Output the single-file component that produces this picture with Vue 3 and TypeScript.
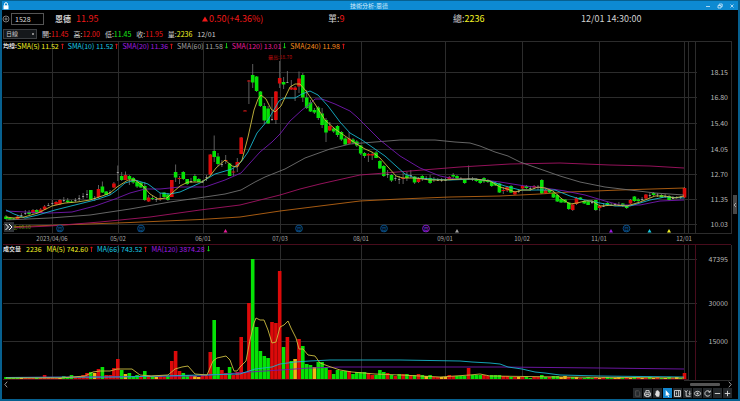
<script setup lang="ts">
interface Candle { x: number; kind: string; top: number; bottom: number; high: number; low: number }
interface Bar { x: number; kind: string; height: number }
interface Average { label: string; value: string; up: boolean; tone: string }

const FIRST_X = 6
const STEP = 3.855
const BASE = 379
const xAt = (i: number): number => Math.round((FIRST_X + STEP * i) * 10) / 10

// kind:bodyTop:bodyBottom:high:low, in chart units ("n" is an unchanged session)
const sessions = `
g:216.5:219:215:219.5 g:218:219.5:218:219.5 g:218.5:219.5:218:220 r:216.5:219:215:219 n:215:215:213:217 n:213:213:210:215
g:212:214:210:215 r:210:213:209:214 g:210:213:209:214 r:209.5:213:208:213 r:206.5:209.5:205:210 n:205:205:203:206
n:203:203:200:206 r:202:204.5:201:205 r:200:204:199:205 n:200:200:197:202 g:200.5:202:198:203 g:201.5:202.5:200:203
n:200:200:198:202 n:198:198:195:201 n:196:196:193:199 n:194:194:190:198 g:190:199.5:190:200 n:198:198:196:201
r:189:197:185:198 g:186.5:192.5:181.5:193 g:191.5:195:191:195 n:192:192:190:195 r:183.5:187.5:182:188 n:172:172:165.5:181
g:176:180:172:181 r:175:180:171.5:180 g:176:179:175:185 g:178:182.5:177:184 g:181.5:186.5:180:188 g:182.5:187.5:182:188
g:186:200:182:201 r:197.5:201.5:195:202 g:198:199:196:200 n:199:199:197:202 r:198:199.5:193:201 g:192.5:197:192:198
g:194.5:200:193:201 r:180:197:180:197 g:172:177.5:164.5:182 r:178:179:176:184 g:172:179:171:180 g:179:184:179:185
n:181:181:178:183 g:176:181:174:182 g:179:182:178:182 n:181.5:181.5:180:183 n:177:177:175:181 r:154.5:174.5:154:175
g:151:157:135.5:162 g:156.5:164:153:166 n:164:164:160:167 r:160:161:155:164 g:163.5:176:163:176 r:171.5:172.5:168:176
r:162:166.5:158:172 r:137.5:154:137:154 r:110.5:110.5:110:111 r:80.5:81.5:80:104 g:75:82.5:64:88 g:76.5:91:76:92
g:91.5:106:91:107 g:106:120.5:103:124 g:108.5:123.5:106:124 n:119:119:97:121 r:91.5:120:91:124 r:78:83.5:61:88
g:82:84.5:77:89 n:82:82:71:83 r:87.5:89.5:80:90 r:87.5:90:86:101 r:78.5:86.5:71.5:93 g:75:97.5:73:102
g:97.5:108:90:109 g:102.5:111.5:100:112 g:110:112.5:108:114 g:107.5:118:106:120 g:113.5:125:108:128 g:120:132.5:118:142
r:126:130.5:122:131 g:128.5:131.5:127:133 g:126:135:125:137 g:132:139.5:131:141 g:138.5:144.5:137:145 r:138.5:143.5:132:144
g:139.5:142.5:138:144 g:141.5:145.5:140:147 g:145.5:153.5:145:155 g:153:156:152:158 r:154:155.5:153:162 r:154:155.5:152:160
g:152.5:158:151:158 g:161:168.5:160:169 g:166:176:165:177 n:174:174:170:178 g:175:180.5:174:182 n:178:178:176:181
n:179:179:176:184 r:178:179:173:184 g:175.5:178:172:181 n:175:175:170:178 g:176.5:182.5:176:184 r:178.5:182:177:183
g:176:179:175:181 n:178:178:176:180 g:178:183:175:184 g:179:180:177:182 n:180:180:178:181 n:180:180:178:182
n:180:180:178:181 r:177:179:176:179 g:175:176.5:173:178 g:176:178.5:175:179 n:178.5:178.5:177:180 g:180:183:179:184
n:178:178:165.5:180 n:179:179:177:181 g:179.5:181:178:182 g:180:183:179:184 g:178:181.5:177:183 g:180:182:179:183
g:182:186:181:187 g:183:185.5:182:186 g:183.5:192.5:183:193 r:190:191:187:194 r:187:190.5:186:192 g:186:192.5:185:193
r:191.5:194.5:191:195 n:191:191:189:193 r:186:188.5:185:189 g:186:188:185:189 n:188:188:186:191 r:186:187.5:185:189
n:187:187:185:190 g:180:193.5:179:194 r:190:193.5:189:194 g:190:192.5:190:193 g:192.5:197.5:192:198 g:195:201.5:194:202
g:199:202.5:198:203 g:199.5:202.5:199:203 g:202.5:209:202:210 r:204.5:210:204:211 r:198:204:197:205 g:197.5:199.5:197:200
g:201:203.5:200:204 g:201.5:205:201:205 n:202:202:200:204 g:200:210:200:211 r:206:208:205:211 n:206:206:203:207
g:203:205:202:206 n:205:205:203:206 n:204:204:203:206 n:205:205:202:206 g:203.5:206:203:207 g:206:208:205:209
r:200:203.5:199:204 g:196.5:201:196:202 g:199.5:201:198:202 n:199:199:197:201 r:194.5:198.5:194:199 n:195:195:193:198
g:193:195:192:196 n:194.5:194.5:193:197 g:195:197.5:194:198 n:196:196:194:198 g:196:200:195:201 n:198:198:196:199
n:197:197:196:199 n:197:197:196:199 r:188:197.5:187:198`

const candles: Candle[] = sessions.trim().split(/\s+/).map((entry, i) => {
  const [kind, ...n] = entry.split(':')
  const [top, bottom, high, low] = n.map(Number)
  return { x: xAt(i), kind, top, bottom: Math.max(bottom, top + 1), high, low }
})

const volumes = `
g2 g1 g1 g1 y2 r2 r1 r1 g1 r1 r4 r2 r2 r1 y1 g3 g2 g4 r2 r3 r4 r6 g7 y6 r10 g12 r4 r4 r11 r20 g9 y5 g6 g3 g4 r2 g8 r4 g3 y2
r3 r2 g3 r18 r28 r8 g6 g4 r4 y3 y2 r4 r3 r27 g59 g12 r9 r6 g12 r4 r7 r42 r7 r76 g120 g52 g28 g23 g21 r57 r56 r108 g32 r42 g18 y20 r40 g33 g15 g14
y12 g17 g17 g12 r9 g5 g9 g8 g8 r8 g5 g7 g7 g7 r6 r4 g4 g9 g7 r6 g4 r3 g5 r5 g5 r4 g4 r5 g4 y3 g4 r2 r2 y2 y2 r4 r3 g3 g3 g3
r11 g4 g4 g4 r4 r3 g4 g4 g4 r3 r3 g2 r2 y2 r2 g2 g1 r2 r2 g4 g2 r2 g3 g3 y2 y3 r2 g2 y2 r1 g1 g2 g1 r2 y1 r2 g2 g1 y1 y2
g1 r2 y1 g2 r2 y1 r1 g2 y1 r2 g1 y1 g2 r1 y2 g1 r6`
const bars: Bar[] = volumes.trim().split(/\s+/).map((entry, i) => ({
  x: xAt(i), kind: entry[0], height: Number(entry.slice(1)),
}))

const priceLines = [
  { tone: 'orange', points: '6,227 60,225 130,222.5 200,219.5 240,217 280,211 320,206 360,201 400,199 450,197 500,196 540,194 570,192 620,190 684,188' },
  { tone: 'magenta', points: '6,228 50,226 100,222 150,217 200,210 240,205 280,195 300,189 320,184 360,175 410,171 460,167 510,164 560,163 610,165 650,166 684,168' },
  { tone: 'gray', points: '6,220 50,218 90,215 130,209 170,202 205,197 225,194 241,190 255,182 265,177 285,169 305,158 330,149 350,144 375,142 400,140 435,140 455,142 470,143 480,146 495,152 508,156 520,162 540,169 560,176 580,182 605,187 630,190 655,193 684,195' },
  { tone: 'purple', points: '6,211 25,212 50,213 72,212 95,206 115,199 130,193 145,189 160,189 180,187 205,187 225,180 241,173 250,163 260,152 272,142 280,134 290,121 302,110 310,104 315,99 322,99 335,104 350,111 357,117 365,125 380,140 400,156 420,168 440,176 455,179 475,179 500,182 525,186 545,188 565,191 585,195 605,201 620,205 640,205 660,201 684,200' },
  { tone: 'cyan', points: '6,210 14,214 25,218 38,215 55,210 75,205 95,200 110,195 117,190 125,183 135,180 148,184 160,193 170,194 180,192 200,183 215,174 232,169 241,162 248,152 257,133 268,120 279,101 284,98 295,98 302,94 310,91 318,95 328,106 340,122 350,133 362,140 372,147 385,156 396,166 405,174 415,178 430,179 450,180 475,179 490,181 505,186 520,190 540,190 555,190 570,196 580,199 600,203 615,206 630,206 650,200 665,197 684,198' },
  { tone: 'yellow', points: '6,217 14,218 24,217 38,213 52,206 65,203 77,202 90,200 105,195 110,193 117,187 128,180 135,180 142,185 150,194 158,199 167,198 172,193 180,186 188,182 202,182 210,176 216,168 225,160 232,166 237,167 242,160 248,137 254,110 258,99 261,95 266,99 271,109 275,112 281,106 290,87 295,84 300,84 306,91 315,104 325,120 335,129 345,136 355,143 365,149 372,152 380,158 388,167 396,176 403,178 415,178 430,180 445,180 460,179 475,179 490,181 500,187 507,189 515,192 522,190 530,190 538,187 545,188 553,191 562,199 570,204 577,203 585,201 592,201 600,206 615,205 627,206 640,202 655,196 665,196 675,198 684,196' },
]
const volumeLines = [
  { tone: 'purple', points: '6,377.5 200,376 250,372 280,370 310,368 340,367 500,367 600,368 684,369' },
  { tone: 'cyan', points: '6,377.5 120,377 200,375 240,374 255,369 272,367 280,364 295,362 310,361 330,360 400,360 460,361 472,362 490,363 500,364 508,367 522,369 535,372 545,373 560,375 600,376 684,377' },
  { tone: 'yellow', points: '6,378 60,378 85,376 93,372 100,371 110,371 117,369 132,369 140,375 150,376 168,375 175,369 182,367 188,366 195,374 207,375 213,361 217,358 226,356 230,360 234,371 237,371 240,367 246,361 250,340 254,323 256,318 260,320 264,320 268,330 272,343 276,342 280,327 284,325 288,321 291,328 296,338 299,349 303,349 308,355 315,356 320,363 328,366 340,370 352,372 375,374 400,375 440,377 470,375 480,374 490,376 560,377 684,378' },
]

const months = [
  { x: 52, label: '2023/04/06' }, { x: 118, label: '05/02' }, { x: 203, label: '06/01' },
  { x: 280, label: '07/03' }, { x: 361, label: '08/01' }, { x: 445, label: '09/01' },
  { x: 522, label: '10/02' }, { x: 599, label: '11/01' }, { x: 684, label: '12/01' },
]
const priceTicks = [
  { y: 72, label: '18.15' }, { y: 97, label: '16.80' }, { y: 123, label: '15.40' }, { y: 149, label: '14.05' },
  { y: 174, label: '12.70' }, { y: 199, label: '11.35' }, { y: 224, label: '10.03' },
]
const volumeTicks = [{ y: 259, label: '47395' }, { y: 303, label: '30000' }, { y: 341, label: '15000' }]
const badges = [
  { x: 60, tone: 'blue' }, { x: 141, tone: 'blue' }, { x: 299, tone: 'blue' },
  { x: 384, tone: 'blue' }, { x: 426, tone: 'purple' }, { x: 626.5, tone: 'blue' },
]
const flags = [
  { x: 225.5, tone: 'magenta' }, { x: 457, tone: 'gray' }, { x: 611, tone: 'purple' },
  { x: 649.5, tone: 'cyan' }, { x: 669, tone: 'yellow' },
]

const quotes = [
  { name: '開', value: '11.45', tone: 'red' }, { name: '高', value: '12.00', tone: 'red' },
  { name: '低', value: '11.45', tone: 'green' }, { name: '收', value: '11.95', tone: 'red' },
  { name: '量', value: '2236', tone: 'yellow' },
]
const priceAverages: Average[] = [
  { label: 'SMA(5)', value: '11.52', up: true, tone: 'yellow' },
  { label: 'SMA(10)', value: '11.52', up: true, tone: 'cyan' },
  { label: 'SMA(20)', value: '11.36', up: true, tone: 'purple' },
  { label: 'SMA(60)', value: '11.58', up: false, tone: 'gray' },
  { label: 'SMA(120)', value: '13.01', up: false, tone: 'magenta' },
  { label: 'SMA(240)', value: '11.98', up: true, tone: 'orange' },
]
const volumeAverages: Average[] = [
  { label: 'MA(5)', value: '742.60', up: true, tone: 'yellow' },
  { label: 'MA(66)', value: '743.52', up: true, tone: 'cyan' },
  { label: 'MA(120)', value: '3874.28', up: false, tone: 'purple' },
]
</script>

<template>
  <div class="window">
    <header class="titlebar">
      <svg class="lock" viewBox="0 0 6 8"><path d="M1.5 3.5V2.2a1.5 1.5 0 0 1 3 0v1.3" fill="none" stroke="#fff" /><rect x="0.5" y="3.3" width="5" height="4" fill="#fff" /></svg>
      <h1>技術分析-恩德</h1>
      <div class="controls">
        <button aria-label="縮小"><svg viewBox="0 0 6 6"><path d="M1 3.5h4" /></svg></button>
        <button aria-label="還原"><svg viewBox="0 0 6 6"><path d="M1 2.5h3v2.5h-3zM2.2 2.3V1h3v2.7H4" /></svg></button>
        <button aria-label="關閉"><svg viewBox="0 0 6 6"><path d="M1.5 1.5l3 3M4.5 1.5l-3 3" /></svg></button>
      </div>
    </header>

    <section class="summary">
      <div class="stock">
        <button class="add" aria-label="加入"><svg viewBox="0 0 8 8"><circle cx="4" cy="4" r="3" /><path d="M2.4 4h3.2M4 2.4v3.2" /></svg></button>
        <input class="code" aria-label="股票代號" value="1528" />
        <strong class="name">恩德</strong>
        <span class="red">11.95</span>
      </div>
      <div class="red change"><svg viewBox="0 0 6 6"><path d="M3 0.5L6 5.5H0z" fill="currentColor" /></svg>0.50(+4.36%)</div>
      <div>單:<span class="red">9</span></div>
      <div>總:<span class="yellow">2236</span></div>
      <time>12/01 14:30:00</time>
    </section>

    <section class="quotes">
      <select aria-label="週期"><option>日線</option></select>
      <span v-for="q in quotes" :key="q.name">{{ q.name }}:<span :class="q.tone">{{ q.value }}</span></span>
      <time>12/01</time>
    </section>

    <section class="pane">
      <div class="legend">
        <b>均線:</b>
        <span v-for="a in priceAverages" :key="a.label" :class="['average', a.tone]">
          {{ a.label }} {{ a.value }}
          <svg :class="a.up ? 'red' : 'green'" viewBox="0 0 3 6"><path :d="a.up ? 'M1.5 6V1M0.3 2.2L1.5 0.8L2.7 2.2' : 'M1.5 0V5M0.3 3.8L1.5 5.2L2.7 3.8'" /></svg>
        </span>
      </div>
      <svg class="chart" viewBox="2 41 736 203">
        <g class="grid">
          <path d="M3 41.5H731.5V233.5H3" />
          <path v-for="t in priceTicks" :key="t.y" :d="`M3 ${t.y + 0.5}H697`" />
          <path v-for="m in months" :key="m.x" :d="`M${m.x + 0.5} 41V233`" />
          <path d="M688.5 41V233M695.5 41V233" />
        </g>
        <g v-for="c in candles" :key="c.x">
          <path class="wick" :d="`M${c.x} ${c.high}V${c.low}`" />
          <rect v-if="c.kind === 'n'" class="doji" :x="c.x - 1" :y="c.top" width="2" height="1" />
          <rect v-else :class="['fill', c.kind]" :x="c.x - 1.8" :y="c.top" width="3.6" :height="c.bottom - c.top" />
        </g>
        <polyline v-for="l in priceLines" :key="l.tone" :class="['line', l.tone]" :points="l.points" />
        <text class="peak" x="280" y="59">最高:18.70</text>
        <g v-for="b in badges" :key="b.x" :class="b.tone">
          <circle class="ring" :cx="b.x" cy="228.5" r="3.4" />
          <text class="badge" :x="b.x" y="230.5">月</text>
        </g>
        <path v-for="f in flags" :key="f.x" :class="f.tone" fill="currentColor" :d="`M${f.x} 229l2 3.5h-4z`" />
        <text class="trough" x="12" y="229">低:10.10</text>
        <text v-for="t in priceTicks" :key="t.label" class="tick" x="728" :y="t.y + 3">{{ t.label }}</text>
        <text v-for="m in months" :key="m.label" class="month" :x="m.x" y="241">{{ m.label }}</text>
      </svg>
      <button class="expand" aria-label="展開"><svg viewBox="0 0 10 10"><path d="M1.5 2l3 3l-3 3M5 2l3 3l-3 3" /></svg></button>
      <button class="handle" aria-label="側欄"><svg viewBox="0 0 4 6"><path d="M3 1L1 3l2 2" /></svg></button>
    </section>

    <section class="pane">
      <div class="legend">
        <b>成交量</b>
        <span class="yellow total">2236</span>
        <span v-for="a in volumeAverages" :key="a.label" :class="['average', a.tone]">
          {{ a.label }} {{ a.value }}
          <svg :class="a.up ? 'red' : 'green'" viewBox="0 0 3 6"><path :d="a.up ? 'M1.5 6V1M0.3 2.2L1.5 0.8L2.7 2.2' : 'M1.5 0V5M0.3 3.8L1.5 5.2L2.7 3.8'" /></svg>
        </span>
      </div>
      <svg class="chart" viewBox="2 244 736 137">
        <g class="grid">
          <path d="M731.5 245V380.5H684" />
          <path v-for="t in volumeTicks" :key="t.y" :d="`M3 ${t.y + 0.5}H697`" />
          <path v-for="m in months" :key="m.x" :d="`M${m.x + 0.5} 245V380`" />
          <path d="M688.5 245V380" />
          <path class="accent" d="M3 244.5H731M695.5 245V380M3 379.5H688" />
        </g>
        <rect v-for="b in bars" :key="b.x" :class="['fill', b.kind]" :x="b.x - 1.8" :y="BASE - b.height" width="3.6" :height="b.height" />
        <polyline v-for="l in volumeLines" :key="l.tone" :class="['line', l.tone]" :points="l.points" />
        <text v-for="t in volumeTicks" :key="t.label" class="tick" x="728" :y="t.y + 3">{{ t.label }}</text>
      </svg>
    </section>

    <div class="scroller">
      <button aria-label="往前"><svg viewBox="0 0 4 7"><path d="M3.2 0.7L0.8 3.5l2.4 2.8" /></svg></button>
      <span class="thumb"></span>
      <button aria-label="往後"><svg viewBox="0 0 4 7"><path d="M0.8 0.7l2.4 2.8l-2.4 2.8" /></svg></button>
    </div>

    <footer class="toolbar">
      <button class="off" aria-label="文件"><svg viewBox="0 0 10 10"><path d="M3 2h3l1.5 1.5V8H3z" /></svg></button>
      <button aria-label="列印"><svg viewBox="0 0 10 10"><path d="M3.2 4V1.8h3.6V4M3 7.5H1.8V4.3h6.4v3.2H7M3.2 6h3.6v2.5H3.2z" /></svg></button>
      <button aria-label="拖曳"><svg viewBox="0 0 10 10"><path class="solid" d="M3 5V2.5h.8V1.8h.9V1.4h.9v.6h.9V3h.9v3.2L6.8 8.5H4L2 5.6l.5-.6z" /></svg></button>
      <button class="active" aria-label="游標"><svg viewBox="0 0 10 10"><path class="solid" d="M3 1v7l1.6-1.4L5.7 9l1-.5-1-2.2h2z" /></svg></button>
      <button aria-label="版面"><svg viewBox="0 0 10 10"><path d="M1.7 1.7h6.6v6.6H1.7zM3.3 3.5h1.2M3.3 5h1.2M3.3 6.5h1.2M6.3 2v6" /></svg></button>
      <button aria-label="座標"><svg viewBox="0 0 10 10"><path d="M2 1.5l1.5 2L5 1.5M3.5 3.5V8H8.5M7.5 2v4M6.3 5l1.2 1.3L8.7 5" /></svg></button>
      <button aria-label="顯示"><svg viewBox="0 0 10 10"><path d="M1 5q4-5 8 0q-4 5-8 0z" /><circle class="solid" cx="5" cy="5" r="1.2" /></svg></button>
      <button aria-label="重新整理"><svg viewBox="0 0 10 10"><path d="M7.8 6.3A3 3 0 1 1 7.6 3.3M8.3 1.8L7.8 3.8L6 3.2" /></svg></button>
      <button aria-label="縮小圖表"><svg viewBox="0 0 10 10"><path d="M2 5h6" /></svg></button>
      <button aria-label="放大圖表"><svg viewBox="0 0 10 10"><path d="M2 5h6M5 2v6" /></svg></button>
    </footer>
  </div>
</template>

<style>
body {
  margin: 0;
  background: #000;
}
</style>

<style scoped>
.window {
  display: flex;
  flex-direction: column;
  box-sizing: border-box;
  min-height: 100vh;
  border: solid #07608f;
  border-width: 0 2px 2px;
  background: #000;
  color: #d0d0d0;
  font-family: "Noto Sans CJK TC", "Noto Sans", sans-serif;
  font-size: 7px;
  line-height: 8px;
  white-space: nowrap;
}
button {
  display: flex;
  align-items: center;
  justify-content: center;
  padding: 0;
  border: 0;
  background: none;
  color: inherit;
}
button svg {
  flex: none;
  fill: none;
  stroke: currentColor;
}
.titlebar {
  display: grid;
  grid-template-columns: 1fr auto 1fr;
  align-items: center;
  box-sizing: border-box;
  height: 10px;
  padding: 0 3px 0 1px;
  border-top: 1px solid #07608f;
  background: #0d8ad2;
  color: #d5ecfa;
}
.lock {
  width: 6px;
  height: 8px;
}
h1 {
  margin: 0;
  font-size: 6px;
  font-weight: 400;
}
.controls {
  display: flex;
  justify-content: flex-end;
  gap: 6px;
}
.controls svg {
  width: 6px;
  height: 6px;
  stroke-width: 0.8;
}
.summary {
  display: grid;
  grid-template-columns: 200fr 126fr 125fr 128fr 157fr;
  align-items: center;
  height: 17px;
  font-size: 9px;
  line-height: 12px;
}
.stock {
  display: flex;
  align-items: center;
}
.add {
  width: 8px;
  height: 8px;
  color: #999;
}
.add svg {
  width: 8px;
  height: 8px;
  stroke-width: 0.8;
}
.code {
  box-sizing: border-box;
  width: 33px;
  height: 12px;
  margin: 0 11px 0 1px;
  padding: 0 3px;
  border: 1px solid #555;
  background: #000;
  color: #ddd;
  font: inherit;
  font-size: 7px;
}
.name {
  margin-right: 5px;
  font-size: 8px;
}
.change {
  display: flex;
  align-items: center;
}
.change svg {
  width: 6px;
  height: 6px;
  margin-right: 1px;
}
.quotes {
  display: flex;
  align-items: center;
  gap: 5px;
  height: 14px;
}
select {
  box-sizing: border-box;
  width: 34px;
  height: 10px;
  margin: 0 0 0 1px;
  padding: 0 2px;
  appearance: none;
  border: 1px solid #3c3f42;
  border-radius: 0;
  background: radial-gradient(circle at 29px 4px, #888 1px, transparent 1px) #15181b;
  color: #ccc;
  font: inherit;
  font-size: 6px;
  line-height: 8px;
}
.pane {
  position: relative;
}
.chart {
  display: block;
  width: 100%;
}
.legend {
  position: absolute;
  top: 1px;
  left: 1px;
  display: flex;
}
.legend b {
  color: #ddd;
  font-size: 6px;
  font-weight: 700;
}
.total {
  margin: 0 5px;
}
.average {
  display: flex;
  align-items: center;
  gap: 2px;
  margin-right: 4px;
}
.average svg {
  width: 3px;
  height: 6px;
  fill: none;
  stroke: currentColor;
  stroke-width: 0.8;
}
.red { color: #f01818; }
.green { color: #18e818; }
.yellow { color: #f4f424; }
.cyan { color: #18cce4; }
.purple { color: #a01ce4; }
.gray { color: #a4a4a4; }
.magenta { color: #e81c9c; }
.orange { color: #f88c1c; }
.blue { color: #0a5c9c; }
.grid path {
  fill: none;
  stroke: #2c2c2c;
  shape-rendering: crispEdges;
}
.grid .accent {
  stroke: #480c1c;
}
.wick {
  stroke: #858585;
  stroke-width: 0.7;
}
.doji { fill: #999; }
.fill.r { fill: #dc0a0a; }
.fill.g { fill: #06e206; }
.fill.y { fill: #f4b414; }
.line {
  fill: none;
  stroke: currentColor;
  stroke-width: 0.9;
  stroke-linejoin: round;
}
.line.gray { color: #707070; }
.line.cyan { color: #16b4cc; }
.line.magenta { color: #a41464; }
.line.orange { color: #b86414; }
.line.purple { color: #7418b0; }
.line.yellow { color: #ccbc40; }
.tick {
  fill: #b8b8b8;
  font-size: 7px;
  text-anchor: end;
}
.month {
  fill: #aaa;
  font-size: 6px;
  text-anchor: middle;
}
.peak {
  fill: #b80c0c;
  font-size: 5px;
  text-anchor: middle;
}
.trough {
  fill: #5c8c14;
  font-size: 5px;
}
.ring {
  fill: #020c18;
  stroke: currentColor;
  stroke-width: 0.8;
}
.badge {
  fill: currentColor;
  font-size: 5px;
  text-anchor: middle;
}
.expand {
  position: absolute;
  bottom: 12px;
  left: 2px;
  width: 10px;
  height: 10px;
  background: #303438;
  color: #fff;
}
.expand svg {
  width: 10px;
  height: 10px;
}
.handle {
  position: absolute;
  right: 1px;
  bottom: 30px;
  width: 4px;
  height: 19px;
  background: #484848;
  color: #ccc;
}
.handle svg {
  width: 4px;
  height: 6px;
  stroke-width: 0.7;
}
.scroller {
  display: flex;
  align-items: center;
  gap: 8px;
  height: 7px;
  padding: 0 6px 0 2px;
  color: #bbb;
}
.scroller svg {
  width: 4px;
  height: 7px;
  stroke-width: 0.8;
}
.thumb {
  width: 30px;
  height: 3px;
  margin-left: auto;
  border-radius: 1px;
  background: #555;
}
.toolbar {
  display: flex;
  justify-content: flex-end;
  gap: 1px;
  padding: 0 6px 1px 0;
}
.toolbar button {
  width: 9px;
  height: 10px;
  background: #24282b;
  color: #ddd;
}
.toolbar .off { color: #555; }
.toolbar .active { background: #1488d0; color: #fff; }
.toolbar svg {
  width: 9px;
  height: 9px;
}
.toolbar .solid {
  fill: currentColor;
  stroke: none;
}
</style>
